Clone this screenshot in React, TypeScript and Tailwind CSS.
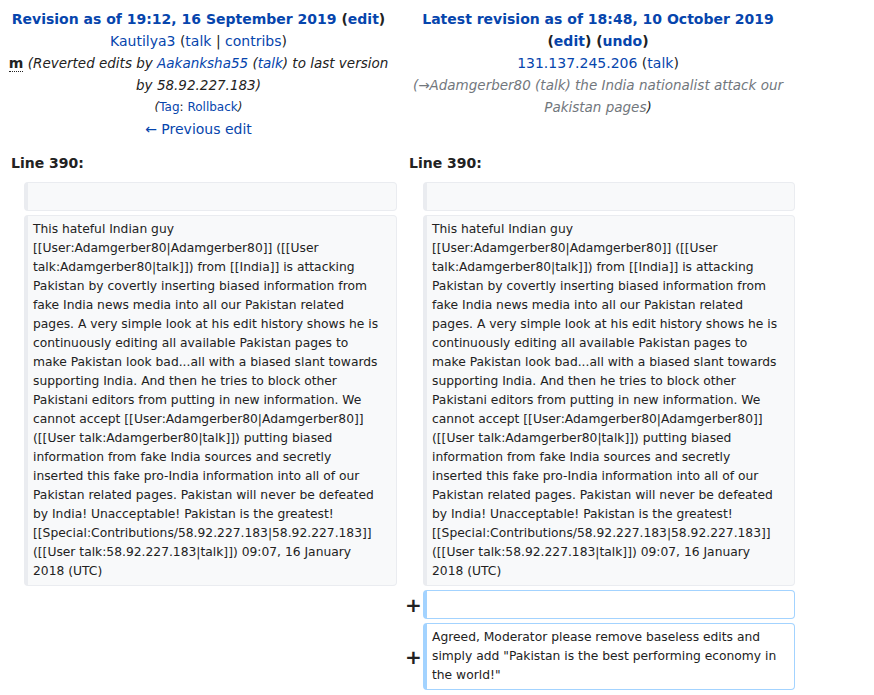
const body =
  "This hateful Indian guy [[User:Adamgerber80|Adamgerber80]] ([[User talk:Adamgerber80|talk]]) from [[India]] is attacking Pakistan by covertly inserting biased information from fake India news media into all our Pakistan related pages. A very simple look at his edit history shows he is continuously editing all available Pakistan pages to make Pakistan look bad...all with a biased slant towards supporting India. And then he tries to block other Pakistani editors from putting in new information. We cannot accept [[User:Adamgerber80|Adamgerber80]] ([[User talk:Adamgerber80|talk]]) putting biased information from fake India sources and secretly inserted this fake pro-India information into all of our Pakistan related pages. Pakistan will never be defeated by India! Unacceptable! Pakistan is the greatest! [[Special:Contributions/58.92.227.183|58.92.227.183]] ([[User talk:58.92.227.183|talk]]) 09:07, 16 January 2018 (UTC)";

const A = ({ children }: { children: React.ReactNode }) => (
  <a className="text-[#0645ad] cursor-pointer">{children}</a>
);

const Context = ({ text }: { text?: string }) => (
  <div className="bg-[#f8f9fa] border border-[#eaecf0] border-l-4 rounded-[4px] pl-[5px] pr-[11px] py-1 min-h-[29px] text-[12.3px] leading-[19px] text-[#222] break-words">
    {text}
  </div>
);

const Added = ({ text }: { text?: string }) => (
  <div className="bg-white border border-[#a3d3ff] border-l-4 rounded-[4px] pl-[5px] pr-[11px] py-1 min-h-[29px] text-[12.3px] leading-[19px] text-[#222] break-words">
    {text}
  </div>
);

const Marker = () => (
  <div className="flex items-center justify-center pl-[7px] text-[20px] font-bold text-[#222] leading-none">
    +
  </div>
);

export default function App() {
  return (
    <div className="bg-white min-h-screen text-[#222] font-['DejaVu_Sans',sans-serif]">
      <div className="grid grid-cols-[24px_373px_26px_372px] gap-y-[4px] w-[795px]">
        {/* old revision header */}
        <div className="col-span-2 text-center text-[14px] leading-[22px] pt-2">
          <div className="font-bold">
            <A>Revision as of 19:12, 16 September 2019</A> (<A>edit</A>)
          </div>
          <div>
            <A>Kautilya3</A> (<A>talk</A> | <A>contribs</A>)
          </div>
          <div>
            <abbr className="font-bold no-underline border-b border-dotted border-[#222]">m</abbr>{" "}
            <span className="italic text-[13.5px]">
              (Reverted edits by <A>Aakanksha55</A> (<A>talk</A>) to last version
              <br />
              by 58.92.227.183)
            </span>
          </div>
          <div className="text-[12px]">
            <span className="italic">(</span>
            <A>Tag</A>: <A>Rollback</A>
            <span className="italic">)</span>
          </div>
          <div>
            <A>← Previous edit</A>
          </div>
        </div>

        {/* new revision header */}
        <div className="col-span-2 text-center text-[14px] leading-[22px] pt-2 pl-1">
          <div className="font-bold">
            <A>Latest revision as of 18:48, 10 October 2019</A>
            <br />
            (<A>edit</A>) (<A>undo</A>)
          </div>
          <div>
            <A>131.137.245.206</A> (<A>talk</A>)
          </div>
          <div className="italic text-[13.5px] text-[#72777d]">
            (→Adamgerber80 (talk) the India nationalist attack our
            <br />
            Pakistan pages<span className="text-[#222]">)</span>
          </div>
        </div>

        {/* line numbers */}
        <div className="col-span-2 pl-[11px] pt-[8px] pb-[4px] font-bold text-[14px] leading-[22px]">
          Line 390:
        </div>
        <div className="col-span-2 pl-[12px] pt-[8px] pb-[4px] font-bold text-[14px] leading-[22px]">
          Line 390:
        </div>

        <div />
        <Context />
        <div />
        <Context />

        <div />
        <Context text={body} />
        <div />
        <Context text={body} />

        <div />
        <div />
        <Marker />
        <Added />

        <div />
        <div />
        <Marker />
        <Added text={'Agreed, Moderator please remove baseless edits and simply add "Pakistan is the best performing economy in the world!"'} />
      </div>
    </div>
  );
}
